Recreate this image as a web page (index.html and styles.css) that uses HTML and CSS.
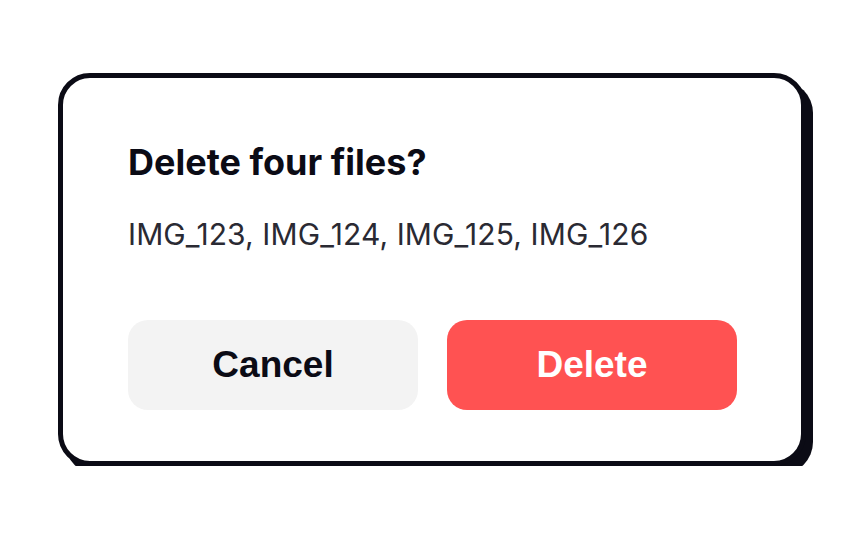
FILE: index.html
```html
<!DOCTYPE html>
<html lang="en">
<head>
    <meta charset="UTF-8">
    <meta name="viewport" content="width=device-width, initial-scale=1.0">
    <title>Delete files</title>
    <link rel="stylesheet" href="styles.css">
</head>
<body>
    <div class="page">
        <div class="dialog">
            <h1 class="dialog-title">Delete four files?</h1>
            <p class="dialog-text">IMG_123, IMG_124, IMG_125, IMG_126</p>
            <div class="dialog-actions">
                <button class="btn btn-cancel">Cancel</button>
                <button class="btn btn-delete">Delete</button>
            </div>
        </div>
    </div>
</body>
</html>
```

FILE: styles.css
```css
body, html {
    margin: 0;
    padding: 0;
    background: #ffffff;
    font-family: Inter, "Noto Sans", sans-serif;
}
.page {
    padding: 73px 0 0 58px;
}
.dialog {
    box-sizing: border-box;
    width: 748px;
    padding: 62px 64px 51px 65px;
    background: #ffffff;
    border: 5px solid #0b0b15;
    border-radius: 32px;
    box-shadow: 7px 8px 0 #0b0b15;
}
.dialog-title {
    margin: 0;
    font-size: 36px;
    font-weight: 700;
    line-height: 44px;
    color: #0b0b15;
}
.dialog-text {
    margin: 32px 0 0;
    font-size: 30px;
    line-height: 36px;
    letter-spacing: 0.1px;
    color: #2a2a33;
}
.dialog-actions {
    display: flex;
    gap: 29px;
    margin-top: 68px;
}
.btn {
    width: 290px;
    height: 90px;
    border: none;
    border-radius: 20px;
    font-family: "Liberation Sans", Arial, sans-serif;
    font-size: 37px;
    font-weight: 700;
}
.btn-cancel {
    background: #f3f3f3;
    color: #0b0b15;
}
.btn-delete {
    background: #ff5252;
    color: #ffffff;
}
```
